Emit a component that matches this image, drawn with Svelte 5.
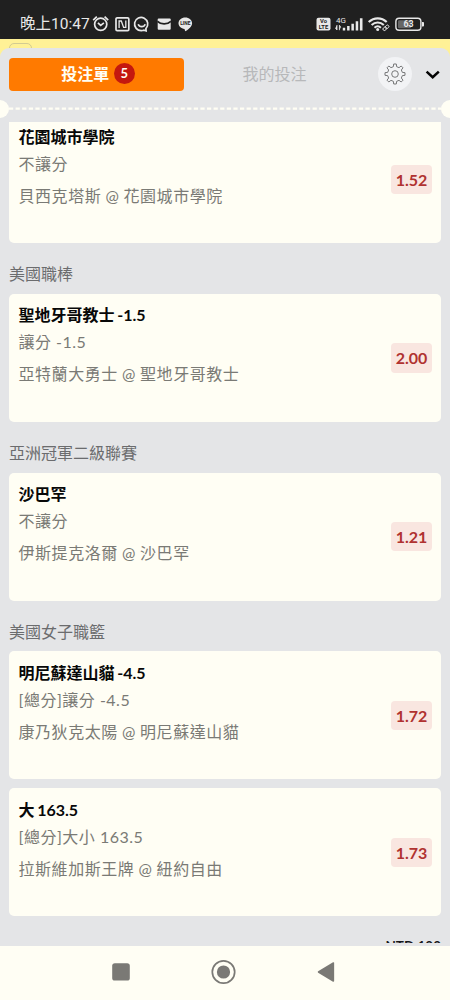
<script lang="ts">
	type Bet = { pick: string; market: string; match: string; odds: string };
	type Group = { league?: string; bets: Bet[] };

	const groups: Group[] = [
		{
			bets: [{ pick: '花園城市學院', market: '不讓分', match: '貝西克塔斯 @ 花園城市學院', odds: '1.52' }]
		},
		{
			league: '美國職棒',
			bets: [{ pick: '聖地牙哥教士 -1.5', market: '讓分 -1.5', match: '亞特蘭大勇士 @ 聖地牙哥教士', odds: '2.00' }]
		},
		{
			league: '亞洲冠軍二級聯賽',
			bets: [{ pick: '沙巴罕', market: '不讓分', match: '伊斯提克洛爾 @ 沙巴罕', odds: '1.21' }]
		},
		{
			league: '美國女子職籃',
			bets: [
				{ pick: '明尼蘇達山貓 -4.5', market: '[總分]讓分 -4.5', match: '康乃狄克太陽 @ 明尼蘇達山貓', odds: '1.72' },
				{ pick: '大 163.5', market: '[總分]大小 163.5', match: '拉斯維加斯王牌 @ 紐約自由', odds: '1.73' }
			]
		}
	];

	let tab = $state('slip');
	let count = $derived(groups.reduce((n, g) => n + g.bets.length, 0));

	// 8-tooth gear outline
	function gear(cx: number, cy: number, outer: number, inner: number) {
		const pts: string[] = [];
		for (let i = 0; i < 8; i++) {
			const a = (i * Math.PI) / 4;
			for (const [r, d] of [[inner, -0.22], [outer, -0.13], [outer, 0.13], [inner, 0.22]]) {
				pts.push(`${(cx + r * Math.sin(a + d)).toFixed(2)},${(cy - r * Math.cos(a + d)).toFixed(2)}`);
			}
		}
		return pts.join(' ');
	}
</script>

<div class="phone">
	<div class="status">
		<span class="status__time">晚上10:47</span>
		<svg class="status__left" width="102" height="18" viewBox="0 0 102 18" fill="none" stroke="#e8e8e8" stroke-width="1.7" aria-hidden="true">
			<circle cx="8.7" cy="9.3" r="6.1" />
			<path d="M1.2 5.2 4.8 1.6M16.2 5.2l-3.6-3.6M5.9 7.9l2.8 2.5 3.2-2.5" />
			<rect x="24" y="2.8" width="12.8" height="12.8" rx="1.2" />
			<path d="M27.1 13V6h2.2l2.3 6.4h2.2V5.5" stroke-width="1.3" />
			<path d="M49.6 15.6a6.6 6.6 0 1 1 4.3-2l.2 2.2-2.4-.6a6.6 6.6 0 0 1-2.1.4z" />
			<path d="M46.2 9.2c1.2 3.3 5.8 3.3 7 0" />
			<rect x="65.7" y="3.5" width="13" height="11.3" rx="1" fill="#e8e8e8" stroke="none" />
			<path d="M65.5 6.4c3.4 3.4 9.8 3.4 13.4 0" stroke="#202020" />
			<path d="M93.3 2.4c-3.8 0-6.8 2.6-6.8 5.8 0 2.9 2.6 5.2 6 5.7l.7 2.4c2.7-1.6 6.9-4.7 6.9-8.1 0-3.2-3-5.8-6.8-5.8z" fill="#e8e8e8" stroke="none" />
			<text x="93.3" y="10.1" font-size="4.8" font-weight="700" text-anchor="middle" fill="#202020" stroke="none">LINE</text>
		</svg>
		<svg class="status__right" width="110" height="18" viewBox="0 0 110 18" fill="#e8e8e8" aria-hidden="true">
			<rect x="0.5" y="2.8" width="14" height="12.7" rx="2" />
			<g fill="#202020" font-size="5.8" font-weight="700" text-anchor="middle">
				<text x="7.5" y="8.3">Vo</text>
				<text x="7.5" y="14.3">LTE</text>
			</g>
			<text x="20" y="8" font-size="8">4G</text>
			<path d="M21 10v5l-1.6-2M23.4 15.2v-5l1.4 2" stroke="#e8e8e8" stroke-width="0.8" />
			<path d="M26.8 12.8h2.4v2.8h-2.4zM31.1 11h2.5v4.6h-2.5zM35.4 8.8h2.5v6.8h-2.5zM39.7 6.3h2.5v9.3h-2.5zM43.9 3.3h2.6v12.3h-2.6z" />
			<g fill="none" stroke="#e8e8e8" stroke-width="2.1">
				<path d="M52.7 7.1c5.3-5 12.8-5 18 0M55.6 10c3.6-3.4 8.6-3.4 12.2 0M58.5 12.7c2-1.8 4.4-1.8 6.4 0" />
			</g>
			<circle cx="61.7" cy="14.5" r="1.5" />
			<g fill="none" stroke="#e8e8e8" stroke-width="0.9">
				<rect x="66.8" y="12.3" width="4" height="2.8" rx="1.3" transform="rotate(-40 68.8 13.7)" />
				<rect x="69" y="10.5" width="4" height="2.8" rx="1.3" transform="rotate(-40 71 11.9)" />
			</g>
			<rect x="79.9" y="3.2" width="25" height="12" rx="3.2" fill="none" stroke="#e8e8e8" stroke-width="1.4" />
			<rect x="82" y="5.2" width="13" height="8" rx="1.2" fill="#666" />
			<path d="M106 7h1.2c.6 0 .8.4.8.9v2.6c0 .5-.2.9-.8.9H106z" />
			<text x="92.6" y="12.3" font-size="8.8" font-weight="700" text-anchor="middle">63</text>
		</svg>
	</div>

	<div class="backdrop"><span class="backdrop__box"></span></div>

	<section class="sheet">
		<header class="head">
			<button class="tab" class:tab--active={tab === 'slip'} onclick={() => (tab = 'slip')}>
				投注單 <span class="tab__count">{count}</span>
			</button>
			<button class="tab" class:tab--active={tab === 'mine'} onclick={() => (tab = 'mine')}>我的投注</button>
			<button class="settings" aria-label="設定">
				<svg width="24" height="24" viewBox="0 0 24 24" fill="none" stroke="#6a6b6c" stroke-width="0.9" stroke-linejoin="round">
					<polygon points={gear(12, 12, 10.1, 7.5)} />
					<circle cx="12" cy="12" r="3.3" />
				</svg>
			</button>
			<button class="collapse" aria-label="收合">
				<svg width="16" height="12" viewBox="0 0 16 12" fill="none" stroke="#050505" stroke-width="2.5">
					<path d="M1.6 3.6 7.7 9.2l6.1-5.6" />
				</svg>
			</button>
		</header>

		<div class="tear">
			<span class="tear__notch"></span>
			<svg class="tear__line" height="3" aria-hidden="true">
				<line x1="0" y1="1.7" x2="100%" y2="1.7" stroke="#fffef4" stroke-width="2.2" stroke-dasharray="4.2 2.4" />
			</svg>
			<span class="tear__notch tear__notch--right"></span>
		</div>

		<div class="list">
			{#each groups as group}
				{#if group.league}
					<h2 class="league">{group.league}</h2>
				{/if}
				<div class="group">
					{#each group.bets as bet}
						<article class="card">
							<div class="card__info">
								<p class="pick">{bet.pick}</p>
								<p class="market">{bet.market}</p>
								<p class="match">{bet.match}</p>
							</div>
							<span class="odds">{bet.odds}</span>
						</article>
					{/each}
				</div>
			{/each}
			<p class="total">NTD 100</p>
		</div>
	</section>

	<nav class="nav">
		<svg width="20" height="20" viewBox="0 0 20 20"><rect x="1.2" y="1.2" width="17.6" height="17.4" rx="2.6" fill="#7a7975" /></svg>
		<svg width="26" height="26" viewBox="0 0 26 26">
			<circle cx="13.5" cy="13" r="11.2" fill="none" stroke="#7a7975" stroke-width="1.7" />
			<circle cx="13.5" cy="13" r="6.6" fill="#7a7975" />
		</svg>
		<svg width="20" height="22" viewBox="0 0 20 22"><path d="M17.4 2v18L2.5 11z" fill="#7a7975" stroke="#7a7975" stroke-width="1.5" stroke-linejoin="round" /></svg>
	</nav>
</div>

<style>
	:global(body) {
		margin: 0;
		background: #fffef4;
	}

	.phone {
		display: flex;
		flex-direction: column;
		width: 450px;
		height: 1000px;
		overflow: hidden;
		background: #fff196;
		font-family: Lato, 'Noto Sans CJK TC', sans-serif;
	}

	p,
	h2 {
		margin: 0;
	}

	button {
		padding: 0;
		border: 0;
		background: none;
		font: inherit;
	}

	.status {
		display: flex;
		flex: none;
		align-items: flex-start;
		box-sizing: border-box;
		height: 39px;
		padding: 15px 24px 0 20px;
		background: #202020;
		color: #e8e8e8;
		font-family: Roboto, 'Noto Sans CJK TC', sans-serif;
	}

	.status__time {
		width: 72px;
		font-size: 15.5px;
		line-height: 19px;
		white-space: nowrap;
	}

	.status__right {
		margin-left: auto;
	}

	.backdrop {
		flex: none;
		height: 9px;
		padding: 4px 0 0 9px;
		box-sizing: border-box;
		overflow: hidden;
	}

	.backdrop__box {
		display: block;
		box-sizing: border-box;
		width: 23px;
		height: 20px;
		border: 1px solid #d3cb91;
		border-radius: 5px;
	}

	.sheet {
		display: flex;
		flex: 1;
		flex-direction: column;
		min-height: 0;
		border-radius: 9px 9px 0 0;
		background: #e4e5e7;
	}

	.head {
		display: flex;
		flex: none;
		align-items: center;
		height: 52px;
		padding: 0 9px;
	}

	.tab {
		display: flex;
		align-items: center;
		justify-content: center;
		gap: 4.5px;
		box-sizing: border-box;
		width: 175px;
		height: 33px;
		margin-right: 3px;
		padding-bottom: 1.5px;
		border-radius: 4px;
		color: #b7b8ba;
		font-size: 16px;
	}

	.tab--active {
		padding-left: 3px;
		background: #ff7a00;
		color: #fffef4;
		font-weight: 700;
	}

	.tab__count {
		width: 21px;
		height: 21px;
		margin-top: 1px;
		border-radius: 50%;
		background: #c4180f;
		font-size: 13px;
		line-height: 21px;
		text-align: center;
	}

	.settings {
		display: grid;
		place-items: center;
		width: 34px;
		height: 34px;
		margin-left: 13px;
		border-radius: 50%;
		background: #f2f3f5;
	}

	.collapse {
		display: grid;
		margin-left: 13px;
	}

	.tear {
		display: flex;
		flex: none;
		align-items: center;
		justify-content: space-between;
		height: 17px;
	}

	.tear__notch {
		width: 9px;
		height: 18px;
		border-radius: 0 9px 9px 0;
		background: #fffef4;
	}

	.tear__notch--right {
		border-radius: 9px 0 0 9px;
	}

	.tear__line {
		flex: 1;
		min-width: 0;
	}

	.list {
		flex: 1;
		min-height: 0;
		margin: 5px 9px 2.5px;
		overflow: hidden;
	}

	/* scrolled a little past the top of the first card */
	.group:first-child {
		margin-top: -6.7px;
	}

	.group {
		display: flex;
		flex-direction: column;
		gap: 9px;
	}

	.league {
		height: 50.7px;
		color: #6b6c6e;
		font-size: 16px;
		font-weight: 400;
		line-height: 61px;
	}

	.card {
		display: flex;
		align-items: center;
		justify-content: space-between;
		box-sizing: border-box;
		height: 128px;
		padding: 0 9px 0 9.5px;
		border-radius: 5px;
		background: #fffef4;
	}

	.card__info {
		align-self: flex-start;
		padding-top: 7.3px;
		font-size: 16px;
		color: #7a7a75;
	}

	.pick {
		color: #080808;
		font-weight: 700;
		line-height: 27px;
		word-spacing: -1.2px;
	}

	.market {
		line-height: 27px;
		letter-spacing: 0.5px;
	}

	.match {
		margin-top: 5px;
		line-height: 27px;
		letter-spacing: 0.55px;
		word-spacing: -0.5px;
	}

	.odds {
		width: 41px;
		height: 29.5px;
		border-radius: 4px;
		background: #f9e6e0;
		color: #b03230;
		font-size: 16px;
		font-weight: 700;
		line-height: 29px;
		text-align: center;
	}

	.total {
		margin-top: 19.5px;
		color: #17181a;
		font-size: 13.5px;
		font-weight: 700;
		line-height: 20px;
		text-align: right;
	}

	.nav {
		display: flex;
		flex: none;
		align-items: center;
		justify-content: space-between;
		box-sizing: border-box;
		height: 54.5px;
		padding: 0 114px 2px 110.5px;
		background: #fffef4;
	}
</style>
